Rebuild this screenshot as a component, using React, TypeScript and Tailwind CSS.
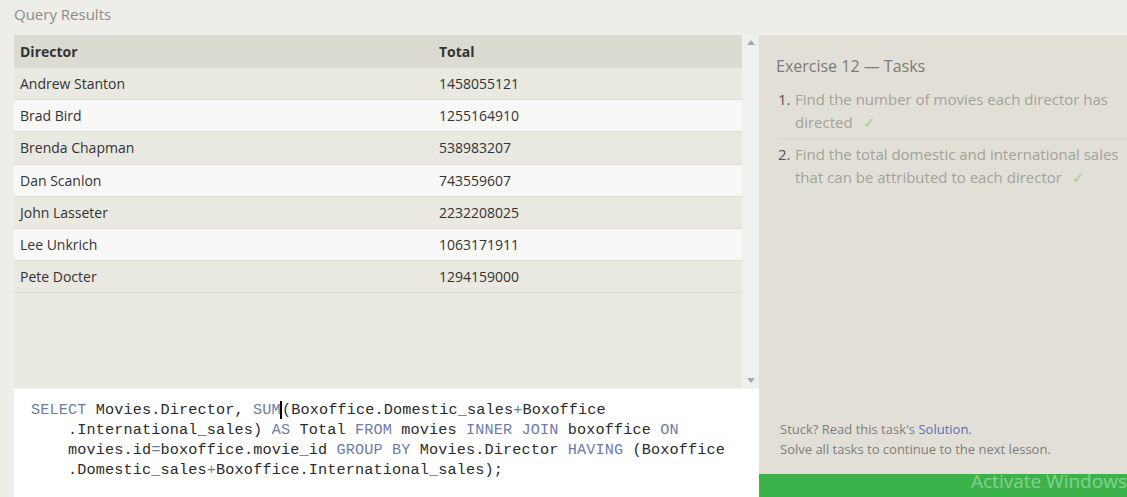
import React from "react";

const rows: [string, string][] = [
  ["Andrew Stanton", "1458055121"],
  ["Brad Bird", "1255164910"],
  ["Brenda Chapman", "538983207"],
  ["Dan Scanlon", "743559607"],
  ["John Lasseter", "2232208025"],
  ["Lee Unkrich", "1063171911"],
  ["Pete Docter", "1294159000"],
];

const K = ({ children }: { children: React.ReactNode }) => (
  <span className="text-[#6d7ca6]">{children}</span>
);

export default function App() {
  return (
    <div
      className="h-[497px] w-[1127px] overflow-hidden bg-[#efede7] flex flex-col"
      style={{ fontFamily: '"Open Sans", "Noto Sans", sans-serif' }}
    >
      <div className="h-[35px] pl-[14px] pt-[4px] text-[15px] leading-[20px] text-[#8c8c8c]">
        Query Results
      </div>
      <div className="flex flex-1 min-h-0">
        {/* left column */}
        <div className="w-[759px] pl-[14px] flex flex-col">
          <div className="h-[354px] flex border-b border-[#f3f2ee]">
            <div className="flex-1 bg-[#e9e8e1] flex flex-col text-[14px] text-[#333]">
              <div className="h-[33px] shrink-0 bg-[#dcdbd1] flex items-center font-bold">
                <div className="w-[425px] pl-[6px]">Director</div>
                <div>Total</div>
              </div>
              {rows.map(([d, t], i) => (
                <div
                  key={d}
                  className={`h-[32.2px] shrink-0 flex items-center border-b border-[#dedcd5] ${
                    i % 2 === 1 ? "bg-[#f8f8f7]" : "bg-[#e9e8e1]"
                  }`}
                >
                  <div className="w-[425px] pl-[6px]">{d}</div>
                  <div>{t}</div>
                </div>
              ))}
            </div>
            <div className="w-[17px] bg-[#f0f0ee] flex flex-col items-center justify-between py-[5px]">
              <svg width="8" height="5" viewBox="0 0 8 5">
                <path d="M0 5 L4 0 L8 5 Z" fill="#a8a8a8" />
              </svg>
              <svg width="8" height="5" viewBox="0 0 8 5">
                <path d="M0 0 L4 5 L8 0 Z" fill="#a8a8a8" />
              </svg>
            </div>
          </div>
          <div
            className="flex-1 bg-white pl-[17px] pt-[11px] text-[15.2px] leading-[20px] tracking-[0.14px] text-[#2b2b2b] whitespace-pre"
            style={{ fontFamily: '"Liberation Mono", "DejaVu Sans Mono", monospace' }}
          >
            <div>
              <K>SELECT</K> Movies.Director, <K>SUM</K>
              <span className="border-l-[2px] border-black -ml-[1px]"></span>
              (Boxoffice.Domestic_sales<K>+</K>Boxoffice
            </div>
            <div>
              {"    "}.International_sales) <K>AS</K> Total <K>FROM</K> movies <K>INNER JOIN</K> boxoffice <K>ON</K>
            </div>
            <div>
              {"    "}movies.id<K>=</K>boxoffice.movie_id <K>GROUP BY</K> Movies.Director <K>HAVING</K> (Boxoffice
            </div>
            <div>
              {"    "}.Domestic_sales<K>+</K>Boxoffice.International_sales);
            </div>
          </div>
        </div>
        {/* right column */}
        <div className="flex-1 bg-[#e2e0d6] flex flex-col">
          <div className="px-[17px] pt-[20px] text-[16px] leading-[22px] text-[#7a7a7a]">
            Exercise 12 — Tasks
          </div>
          <div className="mt-[11px] pl-[19px] text-[15px] leading-[23px]">
            <div className="flex pb-[4px] border-b border-[#d7d5cb]">
              <div className="w-[17px] text-[#555]">1.</div>
              <div className="flex-1 text-[#a3a29b]">
                Find the number of movies each director has directed
                <span className="ml-[10px] text-[#96cf96]">✓</span>
              </div>
            </div>
            <div className="flex pt-[4px]">
              <div className="w-[17px] text-[#555]">2.</div>
              <div className="flex-1 text-[#a3a29b]">
                Find the total domestic and international sales that can be attributed to each director
                <span className="ml-[10px] text-[#96cf96]">✓</span>
              </div>
            </div>
          </div>
          <div className="flex-1" />
          <div className="px-[21px] pb-[15px] text-[13px] leading-[20px] text-[#7d7d7d]">
            <div>
              Stuck? Read this task's <span className="text-[#4e6fc4]">Solution</span>.
            </div>
            <div>Solve all tasks to continue to the next lesson.</div>
          </div>
          <div className="h-[23px] bg-[#3bb34a] relative overflow-hidden">
            <div className="absolute left-[212px] top-[-7px] text-[19px] leading-[28px] text-white/40 whitespace-nowrap">
              Activate Windows
            </div>
            <div className="absolute left-[212px] top-[19px] text-[13px] leading-[18px] text-white/40 whitespace-nowrap">
              Go to Settings to activate Windows.
            </div>
          </div>
        </div>
      </div>
    </div>
  );
}
